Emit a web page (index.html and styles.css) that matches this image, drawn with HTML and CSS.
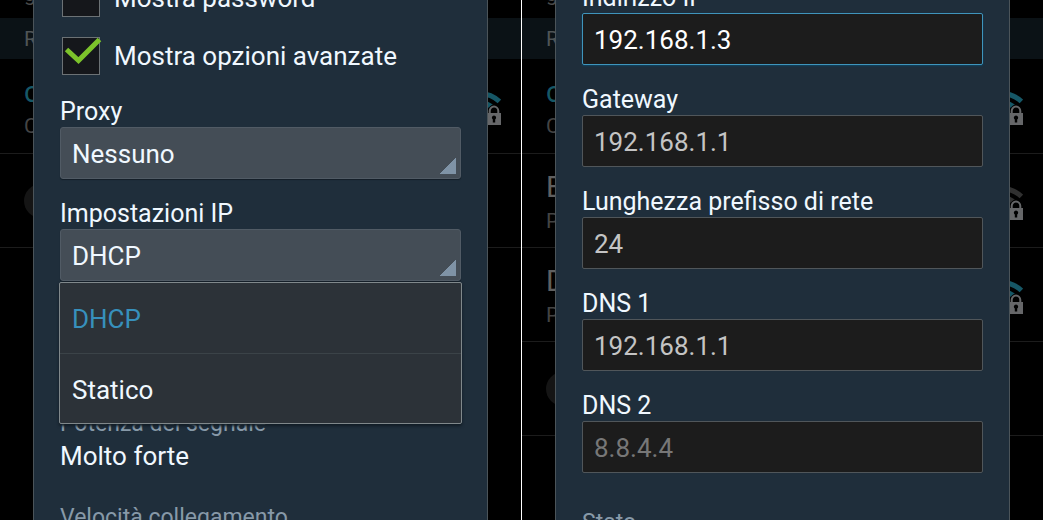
FILE: index.html
```html
<!DOCTYPE html>
<html lang="it">
<head>
<meta charset="utf-8">
<title>Impostazioni IP</title>
<link rel="stylesheet" href="styles.css">
</head>
<body>
<svg class="defs" aria-hidden="true">
  <symbol id="wifi" viewBox="0 0 40 40">
    <g fill="none" stroke="currentColor" stroke-width="5">
      <path d="M0 16.5A27.500 27.500 0 0 1 38.400 16.500"/>
      <path d="M6 23A18.500 18.500 0 0 1 32 23"/>
    </g>
    <path d="M26 27h1v-1a6 6.500 0 0 1 12 0v1h1v13H26z" fill="#000"/>
    <path d="M28.700 29v-3a4.300 4.500 0 0 1 8.600 0v3" fill="none" stroke="#666769" stroke-width="2"/>
    <path d="M26 28h14v12H26z" fill="#666769"/>
    <path d="M33 30.500a2.200 2.200 0 0 1 1.200 4V37.500h-2.400V34.500a2.200 2.200 0 0 1 1.200-4z" fill="#000"/>
  </symbol>
</svg>
<main class="screens">
  <section class="screen">
    <div class="networks">
      <p class="summary">g</p>
      <h2 class="band">R</h2>
      <div class="network active">
        <div><p class="name">c</p><p class="state">C</p></div>
        <svg class="signal"><use href="#wifi"/></svg>
      </div>
      <div class="network"><span class="dot"></span></div>
    </div>
    <form class="dialog dialog-options">
      <label class="check"><span class="box"><input type="checkbox"></span>Mostra password</label>
      <label class="check"><span class="box"><input type="checkbox" checked><svg class="tick" viewBox="0 0 40 40"><path d="M4.500 12.500L16.500 23.500L37.500 2.500" fill="none" stroke="#7cc32b" stroke-width="5"/></svg></span>Mostra opzioni avanzate</label>
      <div class="fields">
        <div class="field">
          <label for="proxy">Proxy</label>
          <select id="proxy"><option>Nessuno</option></select>
        </div>
        <div class="field">
          <label for="ip">Impostazioni IP</label>
          <select id="ip"><option>DHCP</option><option>Statico</option></select>
          <div class="menu">
            <button type="button" class="chosen">DHCP</button>
            <button type="button">Statico</button>
          </div>
        </div>
      </div>
      <dl class="info">
        <dt>Potenza del segnale</dt>
        <dd>Molto forte</dd>
        <dt>Velocità collegamento</dt>
      </dl>
    </form>
  </section>
  <section class="screen">
    <div class="networks">
      <p class="summary">g</p>
      <h2 class="band">R</h2>
      <div class="network active">
        <div><p class="name">c</p><p class="state">C</p></div>
        <svg class="signal"><use href="#wifi"/></svg>
      </div>
      <div class="network">
        <div><p class="name">E</p><p class="state">P</p></div>
        <svg class="signal weak"><use href="#wifi"/></svg>
      </div>
      <div class="network">
        <div><p class="name">D</p><p class="state">P</p></div>
        <svg class="signal"><use href="#wifi"/></svg>
      </div>
      <div class="network"><span class="dot"></span></div>
    </div>
    <form class="dialog dialog-address">
      <div class="fields">
        <div class="field"><label for="addr">Indirizzo IP</label><input class="text focused" id="addr" type="text" value="192.168.1.3"></div>
        <div class="field"><label for="gw">Gateway</label><input class="text" id="gw" type="text" value="192.168.1.1"></div>
        <div class="field"><label for="prefix">Lunghezza prefisso di rete</label><input class="text" id="prefix" type="text" value="24"></div>
        <div class="field"><label for="dns1">DNS 1</label><input class="text" id="dns1" type="text" value="192.168.1.1"></div>
        <div class="field"><label for="dns2">DNS 2</label><input class="text" id="dns2" type="text" placeholder="8.8.4.4"></div>
      </div>
      <dl class="info"><dt>Stato</dt></dl>
    </form>
  </section>
</main>
</body>
</html>
```
FILE: styles.css
```css
* { box-sizing: border-box; margin: 0; }

body {
  background: #000;
  color: #f0f8ff;
  font: 25px/32px Roboto, "Noto Sans", sans-serif;
}

.defs { position: absolute; width: 0; height: 0; }

.screens {
  display: grid;
  grid-template-columns: 1fr 1fr;
  gap: 1px;
  height: 100vh;
  overflow: hidden;
  background: linear-gradient(#fff, #fff) center / 1px 100% no-repeat;
}

.screen {
  display: grid;
  align-items: start;
  overflow: hidden;
  background: #000;
}

.networks, .dialog { grid-area: 1 / 1; min-width: 0; }

/* Dimmed network list behind the dialog */
.networks { color: #606060; }
.summary { height: 40px; margin-top: -22px; padding-left: 24px; font-size: 21px; line-height: 32px; color: #4a4a4a; }
.band {
  height: 41px;
  padding-left: 24px;
  background: #0b1216;
  color: #505557;
  font-size: 21px;
  font-weight: 400;
  line-height: 43px;
}
.network {
  display: flex;
  align-items: center;
  justify-content: space-between;
  height: 94px;
  padding: 0 20px 0 24px;
  border-bottom: 1px solid #1c1c1c;
}
.network.active { height: 95px; }
.name { padding-top: 4px; font-size: 29px; line-height: 36px; }
.active .name { color: #165766; }
.state { font-size: 21px; line-height: 32px; color: #444; }
.signal { width: 40px; height: 40px; margin-bottom: 2px; color: #165766; }
.signal.weak { color: #303030; }
.dot { width: 34px; height: 34px; border-radius: 50%; background: #151515; }

/* Dialog */
.dialog {
  align-self: stretch;
  min-height: 100vh;
  margin: 0 33px;
  padding: 0 26px;
  border: solid #4b5459;
  border-width: 0 1px;
  background: #1f2e3b;
}
.dialog-options { margin-top: -31px; }
.dialog-address { margin-top: -19px; }

.check {
  display: flex;
  align-items: center;
  gap: 14px;
  height: 58px;
  padding-left: 2px;
  font-size: 26px;
  line-height: 34px;
}
.box { position: relative; display: flex; }
.box input {
  appearance: none;
  width: 38px;
  height: 38px;
  border: 1px solid #6c7275;
  background: #15171b;
}
.tick { position: absolute; top: 0; left: 0; width: 40px; height: 40px; pointer-events: none; }

.fields { display: grid; gap: 18px; }
.dialog-options .fields { padding-top: 10px; }
.field { position: relative; display: grid; grid-template-rows: 32px 52px; }
.field label { line-height: 34px; }

select, .text, .menu button {
  width: 100%;
  min-width: 0;
  padding: 2px 11px 0;
  color: inherit;
  font: inherit;
  font-size: 26px;
}
select {
  appearance: none;
  border: 1px solid #515b65;
  border-radius: 3px;
  background: linear-gradient(to bottom right, transparent 50%, #7f93a6 50%) right 4px bottom 4px / 16px 16px no-repeat #444d56;
  box-shadow: 0 1px 1px #141f28;
}
.text {
  border: 1px solid #50565a;
  border-radius: 2px;
  background: #1c1c1c;
  color: #c4c4c4;
  outline: none;
}
.text::placeholder { color: #777; opacity: 1; }
.text.focused { border-color: #3f94bb; color: #fff; box-shadow: 0 1px 2px #0d4462; }

.menu {
  position: absolute;
  top: 100%;
  left: -1px;
  right: -1px;
  margin-top: 1px;
  border: 1px solid #80888b;
  border-radius: 2px;
  background: #2c3238;
  box-shadow: 0 2px 3px #101b24;
}
.menu button {
  display: block;
  height: 70px;
  padding: 2px 12px 0;
  border: 0;
  background: none;
  text-align: left;
}
.menu button + button { border-top: 1px solid #3b4348; }
.menu .chosen { color: #3790bc; }

.info { padding-top: 34px; }
.dialog-options .info { padding-top: 127px; }
.info dt { font-size: 23px; color: #8799a8; }
.info dd { margin-bottom: 30px; font-size: 26px; }
```
